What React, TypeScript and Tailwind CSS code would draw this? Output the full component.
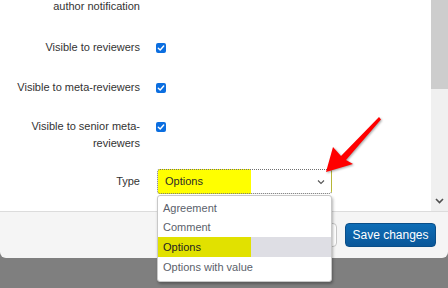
import { ReactNode } from "react";

function Check() {
  return (
    <span className="flex h-[10px] w-[10px] items-center justify-center rounded-[2px] bg-[#0b6ee0]">
      <svg width="8" height="8" viewBox="0 0 8 8" fill="none">
        <path d="M1.3 4.2 L3.2 6 L6.7 2" stroke="white" strokeWidth="1.4" strokeLinecap="round" strokeLinejoin="round" />
      </svg>
    </span>
  );
}

function Row({ label, children, className }: { label: ReactNode; children?: ReactNode; className?: string }) {
  return (
    <div className={"flex gap-4 " + (className ?? "")}>
      <div className="w-[140px] text-right">{label}</div>
      {children}
    </div>
  );
}

const options = ["Agreement", "Comment", "Options", "Options with value"];

export default function App() {
  return (
    <div className="relative h-[288px] w-[448px] overflow-hidden bg-[#7f7f7f] font-['Liberation_Sans',Arial,sans-serif] text-[11px] leading-[17px] text-[#333]">
      <div className="flex flex-col">
        {/* body */}
        <div className="relative z-10 flex h-[211px] bg-white">
          <div className="flex-1">
            <div className="-mt-[2px] flex flex-col">
              <Row label="author notification" className="h-[17px]" />
              <Row label="Visible to reviewers" className="mt-[24px] items-center">
                <Check />
              </Row>
              <Row label="Visible to meta-reviewers" className="mt-[23px] items-center">
                <Check />
              </Row>
              <Row label={<>Visible to senior meta-<br />reviewers</>} className="mt-[22px]">
                <div className="mt-[4px]">
                  <Check />
                </div>
              </Row>
              <Row label="Type" className="mt-[17px] items-center">
                <div className="relative ml-[1px]">
                  <div className="flex h-[25px] w-[175px] items-center justify-between rounded-[3px] border border-dotted border-[#6f6f6f] bg-[linear-gradient(to_right,#ffff00_93px,white_93px)] pl-[7px] pr-[6px] text-[#2a2a2a]">
                    <span>Options</span>
                    <svg width="8" height="6" viewBox="0 0 8 6" fill="none">
                      <path d="M1 1.5 L4 4.5 L7 1.5" stroke="#555" strokeWidth="1.1" />
                    </svg>
                  </div>
                  {/* open dropdown */}
                  <div className="absolute left-0 top-[26px] z-20 w-[175px] rounded-[3px] border border-[#c8c8c8] bg-white pt-[3px] pb-[4px] shadow-[1px_2px_3px_rgba(0,0,0,0.3)]">
                    {options.map((o, i) => (
                      <div
                        key={o}
                        className={
                          "flex items-center pl-[5px] " +
                          (i < 2 ? "h-[19px] " : "h-[20px] ") +
                          (o === "Options"
                            ? "bg-[linear-gradient(to_right,#e1e100_93px,#dedee4_93px)] text-[#222]"
                            : "text-[#5b5f6b]")
                        }
                      >
                        {o}
                      </div>
                    ))}
                  </div>
                </div>
              </Row>
            </div>
          </div>
          {/* scrollbar */}
          <div className="flex w-[17px] flex-col bg-[#f0f0f0]">
            <div className="h-[89px] bg-[#cdcdcd]" />
            <div className="flex-1" />
            <div className="flex h-[17px] items-center justify-center">
              <svg width="9" height="6" viewBox="0 0 9 6" fill="none">
                <path d="M1 1 L4.5 4.5 L8 1" stroke="#505050" strokeWidth="1.6" />
              </svg>
            </div>
            <div className="h-[2px]" />
          </div>
        </div>
        {/* footer */}
        <div className="flex h-[47px] items-center justify-end gap-[8px] rounded-b-[6px] border-t border-[#dcdcdc] bg-[#f5f5f5] pr-[12px]">
          <button className="h-[24px] rounded-[4px] border border-[#c6c6c6] bg-white px-[12px] text-[11px] text-[#333]">
            Cancel
          </button>
          <button className="h-[24px] w-[91px] rounded-[4px] border border-[#0a4e88] bg-[linear-gradient(#0e6db6,#0a5799)] text-[12px] text-white">
            Save changes
          </button>
        </div>
      </div>
      {/* red arrow annotation */}
      <svg className="pointer-events-none absolute left-0 top-0 z-30" width="448" height="288" viewBox="0 0 448 288">
        <polygon
          points="326,172 333,147 341,156 379,117 381,119.5 346,160 353,164"
          fill="#ff0000"
          style={{ filter: "drop-shadow(1px 1px 1px rgba(0,0,0,0.35))" }}
        />
      </svg>
    </div>
  );
}
